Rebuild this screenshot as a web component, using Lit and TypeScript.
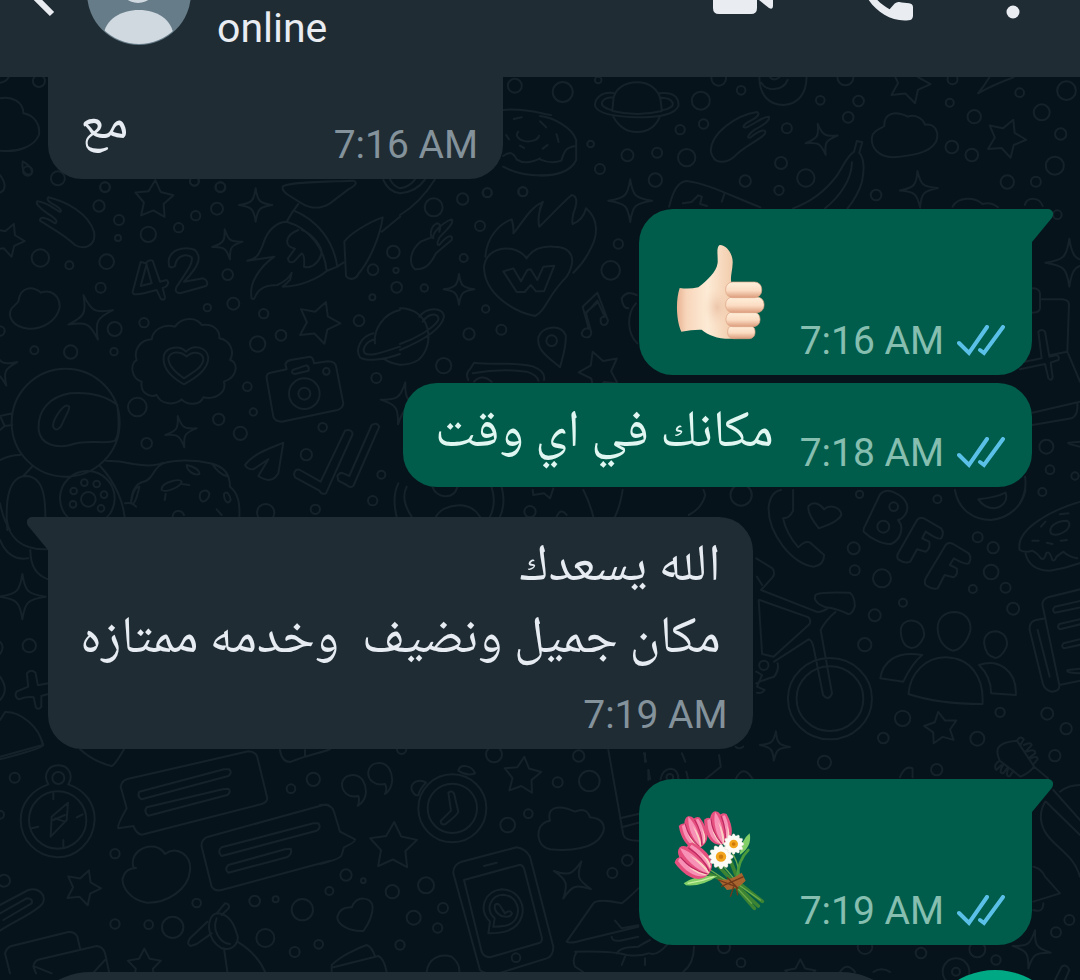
import { LitElement, html, svg, css, nothing } from "lit";
import { customElement, property } from "lit/decorators.js";

type Dot = [number, number, number];

/* Each region of the wallpaper is drawn on its own enlarged grid. */
interface Region {
  x: number;
  y: number;
  sx: number;
  dots: Dot[];
  stars?: [number, number, number, number][];
  sparks?: [number, number, number, number][];
  paths: string[];
}

const ring = (n: number, fn: (i: number) => [number, number]) =>
  Array.from({ length: n }, (_, i) => fn(i).map((v) => v.toFixed(1)).join(" ")).join("L");

const starPath = (x: number, y: number, r: number, rot: number) =>
  "M" + ring(10, (i) => {
    const a = ((rot - 90 + i * 36) * Math.PI) / 180;
    const q = i % 2 ? r * 0.52 : r;
    return [x + q * Math.cos(a), y + q * Math.sin(a)];
  }) + "Z";

const sparkPath = (x: number, y: number, r: number, rot: number) => {
  const p = (a: number, q: number) => {
    const t = ((rot - 90 + a) * Math.PI) / 180;
    return `${(x + q * Math.cos(t)).toFixed(1)} ${(y + q * Math.sin(t)).toFixed(1)}`;
  };
  let d = `M${p(0, r)}`;
  for (let i = 0; i < 4; i++) d += `Q${p(i * 90 + 12, r * 0.42)} ${p(i * 90 + 45, r * 0.36)}Q${p(i * 90 + 78, r * 0.42)} ${p(i * 90 + 90, r)}`;
  return d + "Z";
};

const circle = (x: number, y: number, r: number) =>
  `M${x - r} ${y}a${r} ${r} 0 1 0 ${2 * r} 0a${r} ${r} 0 1 0 ${-2 * r} 0Z`;

const REGIONS: Region[] = [
  {
    x: 0, y: 0, sx: 2.904,
    dots: [[113, 243, 18], [1495, 257, 21], [168, 535, 21], [305, 562, 15], [565, 543, 14], [640, 562, 15], [1415, 578, 14], [1518, 575, 14]],
    paths: [
      "M0 248Q18 246 25 232",
      "M0 295C35 288 68 305 68 340C100 345 118 375 113 405C100 440 50 458 0 452",
      "M66 484C90 498 98 515 88 523C72 528 62 510 66 484Z",
      "M0 525C18 550 18 570 0 578",
      "M1461 330C1520 322 1568 340 1600 345M1461 500C1500 522 1540 530 1600 525M1461 468C1480 455 1490 455 1500 478C1520 492 1540 490 1568 475",
      "M1505 395a32 20 0 1 0 60 12M1492 357L1515 352M1470 405L1478 418M1510 437L1522 444",
    ],
  },
  {
    x: 540, y: 0, sx: 2.904,
    dots: [[66, 276, 30], [169, 240, 10], [467, 302, 27], [519, 235, 22], [584, 271, 13], [475, 372, 14], [407, 389, 14], [717, 385, 15], [814, 301, 13], [925, 303, 16], [895, 352, 16], [887, 232, 24], [1198, 238, 15], [1190, 308, 12], [1261, 350, 20], [1457, 337, 24], [1529, 272, 28], [1393, 278, 13], [1512, 402, 17], [1495, 497, 27], [1440, 545, 15], [1357, 546, 20], [1254, 465, 19], [1196, 441, 19], [976, 585, 16], [772, 534, 26], [700, 489, 18], [694, 571, 14], [596, 543, 17], [426, 473, 26], [340, 458, 15], [254, 466, 18], [147, 432, 10], [174, 507, 15], [335, 540, 20]],
    stars: [[1072, 250, 62, 20], [1352, 415, 60, 22]],
    sparks: [[818, 418, 48, -14], [262, 602, 64, 0], [1100, 568, 55, -4]],
    paths: [
      "M213 300C215 268 245 247 282 247C320 247 345 270 350 300L354 333C310 344 255 344 210 333Z",
      "M213 279C175 275 158 298 160 318C168 342 220 350 280 352C345 352 392 345 402 318C404 290 385 275 346 280M213 292C185 292 175 306 182 317C190 325 200 328 210 331M348 293C378 292 390 306 384 318C376 326 366 329 354 331",
      "M213 350C230 382 255 396 282 396C312 396 336 380 348 350",
      "M0 348C40 352 95 385 105 420L105 480C90 515 45 528 0 526M105 438C75 440 70 455 62 482C40 490 15 485 0 478M0 364L18 382M48 403L54 426M8 446L22 435",
      "M630 336C570 345 495 400 496 455C505 495 540 490 562 472C590 440 630 425 652 403C662 385 640 388 612 412C598 418 604 402 625 388C650 375 668 362 665 350C650 348 625 370 600 382C585 385 588 375 612 362C632 352 640 340 630 336Z",
      "M637 232C637 285 665 315 707 315C750 312 774 280 774 232M643 248C655 275 705 275 719 240M668 232Q680 245 695 232",
      "M1000 378C998 340 1030 330 1068 350C1090 342 1112 355 1118 374C1150 370 1160 400 1150 425C1130 462 1070 468 1025 472C985 470 960 445 964 412C968 392 985 388 1000 378Z",
      "M920 423L936 427L927 458C945 480 940 520 935 545C925 580 905 610 893 625M920 423L912 455C890 470 880 500 860 530C830 570 790 605 735 625M906 487C905 540 870 590 828 625",
      "M375 620C385 580 398 545 425 543C480 548 560 590 640 622M535 583L528 605M415 610L440 606L460 586L470 590L465 612L485 618",
      "M1305 232Q1290 258 1272 280Q1315 255 1375 232M1198 620C1215 590 1260 590 1285 612Q1310 605 1330 622M1408 615C1415 590 1450 590 1460 618",
      "M0 625L8 605",
    ],
  },
  {
    x: 0, y: 170, sx: 3,
    dots: [[83, 3, 14], [315, 51, 14], [297, 108, 17], [357, 150, 15], [354, 204, 9], [583, 34, 13], [661, 51, 14], [651, 116, 18], [587, 137, 14], [536, 173, 14], [445, 193, 23], [121, 264, 26], [208, 286, 12], [320, 275, 22], [302, 353, 15], [344, 477, 21], [432, 458, 14], [342, 545, 11], [212, 546, 20], [103, 541, 12], [0, 483, 14], [683, 314, 16], [700, 401, 18], [622, 413, 11], [791, 431, 14], [843, 496, 16], [773, 522, 23], [1077, 452, 16], [1117, 382, 9], [1119, 299, 16], [1180, 246, 19], [1188, 301, 8], [1190, 352, 16], [1129, 624, 15], [412, 711, 28], [742, 650, 13], [760, 726, 11], [656, 748, 17], [721, 790, 20], [440, 820, 16], [968, 772, 13], [919, 854, 17], [1144, 914, 12], [1118, 992, 14], [946, 1018, 14], [797, 1028, 26], [253, 938, 10], [290, 942, 10], [221, 963, 10], [312, 974, 10], [219, 1003, 10], [303, 1015, 10], [979, 604, 10]],
    stars: [[462, 90, 60, 4], [22, 210, 52, 22], [955, 458, 66, 20]],
    sparks: [[767, 105, 50, 0], [682, 223, 46, -10], [272, 442, 70, -18], [543, 785, 48, -12], [0, 595, 55, -20], [1205, 700, 64, 10]],
    paths: [
      "M145 82C200 95 265 130 282 185C290 230 250 240 225 225C195 195 155 175 120 152C118 138 140 142 165 160C178 155 160 140 142 130C120 115 105 100 112 94C140 96 160 115 180 126C190 120 170 108 155 100Q138 90 145 82Z",
      "M55 395C60 352 95 345 123 368C155 355 180 380 179 412C170 455 125 478 85 476C40 472 20 440 35 415Z",
      "M438 280L422 276L398 365C398 375 405 378 470 360L482 386C490 392 495 388 495 382L488 354C505 350 508 335 500 330L480 335L458 272Q448 268 438 278L455 340L422 348L440 282",
      "M508 290C495 240 555 225 585 240C605 260 600 285 552 335L610 325C622 330 625 342 618 348L540 370C525 368 525 360 530 350C560 305 580 280 575 262C560 250 530 255 525 288Q515 295 508 290Z",
      "M848 50C860 35 1000 35 1060 32C1075 38 1065 48 1045 58L990 100C960 118 935 118 905 100L865 75Q845 62 848 50ZM895 102C880 120 868 140 860 155C825 155 800 190 792 215C780 250 770 268 742 272L823 260C780 290 745 340 755 385Q762 392 768 375C780 350 805 345 832 345Q865 330 875 308L870 330L848 350C900 350 955 325 980 303",
      "M882 122C950 150 1000 210 1012 290L980 303C975 240 930 175 860 155M895 180C855 195 850 230 885 236L864 265Q865 282 882 275L905 250Q915 255 912 290C940 298 962 270 965 245C958 215 925 185 905 180M1012 290L1030 278",
      "M1148 142C1110 155 1050 190 1033 215L1038 318C1048 332 1068 328 1075 312C1110 270 1140 200 1148 142ZM1145 185L1200 140M1150 30Q1165 65 1200 70M1170 28Q1180 48 1200 55",
      "M455 508C458 480 490 460 525 470C545 440 590 440 605 465C640 460 660 480 658 505C690 510 705 545 690 570C715 575 715 620 672 635C680 665 650 690 610 682C600 708 560 705 545 688C520 710 480 700 470 675C445 685 420 665 425 635C392 625 390 580 410 570C400 540 420 510 455 508Z",
      "M552 643C510 620 485 590 492 555C500 530 540 525 558 545C580 522 620 530 625 562C625 600 585 625 552 643ZM552 625C530 610 505 590 505 565C512 540 545 545 560 560C580 540 610 548 610 570C605 595 575 610 552 625Z",
      circle(197, 758, 162),
      "M352 705C320 680 270 665 210 670C150 680 112 720 116 780C122 825 170 835 210 825C260 805 320 825 345 812Q362 790 352 705ZM195 708C180 718 155 755 160 772C168 785 180 775 185 765C195 740 215 710 205 708Q200 705 195 708Z",
      "M37 730L0 738L14 768L37 765M14 768L0 780M0 870Q30 855 60 855M70 918L98 888M300 888C340 930 380 1000 375 1080M318 872Q360 872 400 882Q460 892 490 878M22 1080C15 990 25 920 78 918C130 920 140 980 135 1080M0 1000Q10 1050 30 1080",
      circle(262, 985, 82), circle(265, 988, 22),
      "M375 1000Q395 995 408 1010M393 1000C395 960 410 940 430 935C460 930 460 890 490 880C530 868 590 870 630 880C680 890 690 920 690 950C715 970 720 1000 718 1040M560 885C580 890 600 900 598 912C580 918 560 900 560 885ZM635 880C660 890 685 905 680 918Q660 915 635 880ZM485 955C490 935 540 925 545 935C542 950 500 970 485 960ZM545 942L568 945M497 972L494 990M600 985C595 960 620 955 628 970C628 990 605 1005 600 985ZM672 972C680 960 690 975 692 990C685 1005 672 995 672 972ZM518 1040C520 1018 545 1018 552 1035M650 1018L665 1035M393 1000Q405 1010 418 950Q400 950 393 1000",
      "M800 625Q798 610 812 608L860 598L856 582Q860 572 872 570L930 560Q940 562 942 580L985 574Q1005 575 1008 588L1030 700Q1028 715 1012 720L845 755Q825 755 820 740ZM878 600L918 586Q928 588 926 602L884 612Q872 610 878 600Z",
      circle(913, 671, 46), circle(913, 671, 18),
      "M735 885C760 850 810 835 850 818L835 910Q815 945 775 918L805 868L760 898Q740 898 735 885ZM882 912Q885 895 900 900L962 935L1035 782Q1055 775 1058 792L978 970Q965 975 958 962L885 922ZM1012 918Q1020 905 1030 910L1048 918L1115 765Q1130 755 1138 770L1060 948Q1050 955 1040 945L1015 932Z",
      "M1125 520C1120 480 1150 430 1200 420M1120 490C1080 500 1065 540 1080 562C1100 575 1150 570 1200 552M1125 508C1095 515 1085 540 1095 550C1110 560 1135 550 1200 530M1150 565Q1170 580 1200 584M1195 940Q1175 980 1190 1040",
    ],
  },
  {
    x: 400, y: 170, sx: 3,
    dots: [[101, 112, 27], [188, 87, 17], [262, 68, 13], [369, 65, 13], [240, 168, 15], [191, 264, 12], [73, 354, 11], [655, 222, 14], [632, 301, 28], [257, 417, 11], [207, 492, 17], [304, 479, 15], [131, 587, 23], [455, 512, 16], [390, 1025, 17]],
    sparks: [[177, 358, 46, 0]],
    stars: [[600, 605, 64, -20]],
    paths: [
      "M0 70Q50 65 75 28M0 55Q30 50 45 28M0 135Q60 100 105 28",
      "M155 148C125 158 98 190 100 200L62 215C30 240 25 280 45 298C80 300 95 275 108 250L155 210C160 195 145 190 118 225C108 228 112 205 130 190C150 170 162 155 155 148ZM100 205C88 200 90 170 110 160Q125 160 118 185",
      "M380 265C350 220 260 225 252 290C252 370 340 425 405 438C440 420 440 380 500 320C530 270 520 230 460 230C420 228 395 240 380 265ZM256 260C260 200 300 160 335 148Q342 170 340 190C360 170 390 110 428 97Q410 140 418 170C440 150 480 105 515 75Q540 80 520 130Q515 155 518 162Q550 150 558 115C600 150 590 200 575 230Q555 275 520 308",
      "M310 304L340 295L363 334L382 300L392 298L412 330L430 290L463 287L432 364H408L392 345L374 366H350Z",
      "M548 410L592 368L624 452C620 470 602 468 602 452Q600 440 614 440L592 392L558 430L574 488C572 508 548 505 545 490Q550 472 566 476ZM555 430L590 400M480 592C450 565 410 545 415 502C425 470 480 460 497 495C500 530 488 560 480 592Z",
      "M710 375Q680 360 665 385Q668 415 685 415M708 400C680 430 680 490 712 520",
      "M0 415C90 415 110 520 55 570Q30 585 0 584M58 440C80 410 130 410 132 440C125 480 60 515 0 540M68 455C90 425 118 430 115 450C100 475 50 505 0 522",
      "M205 630Q195 610 210 598L222 578C280 585 350 575 400 590Q438 605 432 630M218 610Q300 595 380 605Q412 615 415 632M222 635Q245 610 275 635",
      "M20 950C5 980 15 1010 35 1040M98 952C110 985 160 990 172 952M275 952Q290 1000 270 1040M305 952Q318 1000 300 1040M108 1040C130 1000 210 990 240 1040M398 960L400 975L432 970L450 985L460 955M550 960Q570 1000 580 1040M668 960Q660 1010 645 1040M470 1040Q482 1012 500 1035",
    ],
  },
  {
    x: 0, y: 500, sx: 2.904,
    dots: [[85, 437, 20]],
    sparks: [[65, 290, 68, 0]],
    paths: [
      "M0 120C20 170 50 180 82 175M20 60C25 110 60 150 138 148M88 150Q88 220 140 238M0 425Q15 440 0 462M48 575Q40 590 55 598Q80 588 98 592L104 622Q112 632 120 620V588L140 582M48 575L82 560L78 520Q90 505 103 518L110 556L140 550",
      "M0 530Q28 570 0 600M15 636C60 635 115 680 124 735L0 770M15 636L0 660",
    ],
  },
  {
    x: 540, y: 490, sx: 2.904,
    dots: [[584, 15, 32], [928, 13, 11], [1154, 28, 12], [911, 175, 18], [914, 241, 15], [993, 265, 27], [1054, 338, 12], [972, 376, 18], [943, 464, 20], [1271, 142, 15], [1316, 173, 17], [1310, 246, 22], [1257, 297, 12], [1352, 293, 15], [1374, 356, 18], [1053, 685, 23], [997, 744, 16], [826, 817, 20], [1270, 746, 21], [1336, 667, 14], [1473, 671, 18], [1528, 716, 17], [1495, 797, 17], [1152, 839, 17], [1027, 50, 13], [997, 110, 18], [650, 526, 14]],
    stars: [[1165, 715, 50, -10]],
    sparks: [[682, 768, 44, 4]],
    paths: [
      "M735 0V62Q725 85 706 85Q715 130 750 172Q770 150 785 158L825 195Q825 225 795 230C735 225 660 130 664 50Q670 5 700 0M810 115C790 90 775 65 780 48C795 32 815 42 825 58C845 40 875 55 875 75C865 95 835 105 810 115Z",
      "M988 12C1000 0 1015 0 1030 8C1065 25 1075 50 1060 75Q1050 88 1040 90C1060 115 1045 150 1020 162C995 165 960 145 940 125Q938 115 945 105ZM1095 90Q1102 80 1115 85L1165 115Q1175 130 1165 145Q1155 150 1120 125L1110 145L1130 155Q1135 175 1120 185L1095 178L1075 215Q1060 222 1040 208Q1035 200 1040 190ZM1178 165Q1185 155 1200 162L1245 190Q1255 205 1245 220Q1235 225 1202 205L1190 225L1210 235Q1215 255 1200 262L1175 255L1155 295Q1140 300 1120 285Q1115 275 1120 265Z",
      "M1205 0C1215 60 1260 90 1310 90C1360 85 1400 50 1410 0M1273 28C1300 25 1330 20 1352 8C1360 30 1345 50 1320 55Q1290 55 1273 28Z",
      "M1580 32C1480 60 1380 120 1393 180Q1410 190 1430 182Q1445 190 1455 205Q1465 212 1470 190Q1480 180 1488 210Q1495 215 1500 200L1520 185Q1535 200 1560 205M1410 190Q1420 240 1480 242Q1530 235 1580 215M1484 130C1475 110 1500 92 1530 92Q1545 100 1530 120Q1500 142 1484 130ZM1455 110L1468 95M1510 73L1535 70M1430 152L1448 152M1472 158L1488 162M1512 152L1530 150",
      "M628 205L675 235Q685 250 675 262L642 300L795 362Q810 372 835 355M630 260L645 285M638 330L780 382Q790 395 780 405L678 500L645 492L635 330M680 515L780 448Q790 450 795 475L822 615Q838 635 848 610L815 420Q830 390 858 366M800 315Q810 305 900 308Q915 320 914 350Q905 375 895 372Q860 355 830 352Q800 340 798 325ZM628 580Q660 565 680 560Q695 540 690 520M628 545L645 555L630 590L652 600Q645 612 630 608",
      circle(842, 626, 122), circle(842, 626, 97),
      "M1048 428C1045 400 1065 390 1083 392C1105 395 1118 415 1115 440C1105 465 1090 474 1080 474C1062 472 1050 455 1048 428ZM1155 420C1152 385 1175 366 1205 366C1235 368 1252 390 1250 420C1242 455 1220 480 1200 482C1178 478 1158 455 1155 420ZM1290 460C1288 435 1305 424 1325 424C1348 428 1360 445 1355 470C1345 495 1330 504 1322 504C1305 500 1292 485 1290 460Z",
      "M988 565C995 520 1030 480 1110 495Q1080 520 1055 575ZM1070 612C1075 550 1120 500 1180 502C1250 505 1290 560 1285 642C1230 642 1150 640 1070 612ZM1275 525C1330 505 1385 540 1382 615L1310 610Q1310 560 1275 525Z",
      "M1580 295L1475 322Q1455 330 1460 350L1508 585Q1510 605 1485 605Q1465 600 1460 580L1422 420Q1420 395 1440 390L1468 385M1445 420L1480 560M1580 330L1495 350Q1485 360 1495 368L1580 350M1580 385L1508 402Q1500 412 1510 418L1580 400M1580 445L1520 460Q1512 470 1522 475L1580 462M1580 535L1532 540Q1525 550 1580 550M1508 585L1580 570",
      "M432 75Q470 55 480 15L475 0M302 790L308 815M412 790L422 815M520 795L525 830L480 868M350 868Q355 838 380 836Q402 838 402 868M568 868Q590 820 618 868M315 840L320 868M425 845L430 868M568 770Q578 780 590 770",
      circle(377, 862, 10),
      "M1330 775Q1340 755 1385 752L1435 830Q1420 850 1395 860L1335 812Q1325 790 1330 775ZM1385 752Q1395 735 1405 748L1395 765M1405 765Q1425 755 1428 765L1410 785M1415 785Q1440 775 1438 790L1422 802M1425 805Q1445 795 1445 808L1435 820M1335 812Q1315 825 1325 840L1340 825M1345 825Q1330 850 1345 850L1358 832M1360 835Q1350 862 1365 858L1375 842M1435 830L1475 865M1045 862Q1060 825 1082 835V862",
    ],
  },
  {
    x: 0, y: 740, sx: 3,
    dots: [[44, 113, 15], [0, 224, 12], [12, 422, 18], [873, 146, 13], [940, 118, 20], [345, 341, 14], [345, 552, 14], [446, 554, 13], [518, 562, 32], [590, 489, 13], [764, 483, 16], [827, 478, 9], [907, 509, 32], [796, 594, 27], [884, 636, 15], [956, 613, 13]],
    stars: [[248, 443, 55, 20], [433, 678, 52, 0]],
    paths: [
      circle(175, 114, 18), circle(173, 240, 86),
      "M145 133C130 110 140 76 175 76C210 76 220 110 205 133C255 150 285 190 284 240C280 310 225 352 172 352C110 350 62 300 62 240C62 190 95 150 145 133ZM160 160V178M248 223L230 232M190 320V300M95 265L115 260M204 188L155 230L152 290L200 240ZM160 240L195 225M165 235L195 245",
      "M130 15Q128 25 0 58M125 0L130 15M240 28Q280 65 335 78Q345 75 372 28",
      "M382 117L745 34Q768 35 772 52L802 175Q800 188 785 192L425 284Q410 282 400 258L355 265Q350 258 380 205L362 140Q365 122 382 117ZM418 155Q410 168 425 178L685 108Q698 98 688 88L672 88ZM440 202Q430 215 445 227L682 165Q695 155 685 146L668 148Z",
      "M400 382C390 340 430 315 465 320Q485 325 495 342C530 315 575 345 570 392C565 450 500 490 440 488C390 480 365 440 368 415Q375 385 408 384Z",
      "M625 290L970 195Q985 190 990 200M605 320Q602 298 625 290M605 320L635 440Q645 455 665 450L990 362M665 322Q650 335 665 348L950 272Q965 262 955 250L940 250ZM685 375Q672 388 685 398L860 352Q878 342 872 326L855 328Z",
      "M0 495L85 450C115 440 140 465 128 490C110 515 50 540 0 572M0 520L80 475Q100 475 95 490L10 540M15 640Q20 622 35 618L205 576Q225 575 232 590L240 625M15 640L30 700M100 680Q102 662 120 658L290 618Q310 620 315 640L328 700M100 680L108 700M105 680L155 700M315 660L278 700",
      "M650 520L675 490Q690 490 686 505L665 525M622 545L570 595Q558 612 572 618L590 612L635 580M650 520C615 530 620 600 665 625C705 635 720 600 710 580C700 545 680 520 650 520ZM650 535C635 570 660 610 690 612M672 625L682 695M712 605Q770 640 795 695",
      "M840 30Q845 65 870 66L915 50V30M915 50L985 30",
    ],
  },
  {
    x: 320, y: 740, sx: 3,
    dots: [[522, 43, 24], [776, 48, 17], [713, 127, 15], [808, 123, 31], [563, 255, 22], [625, 221, 13], [922, 361, 16], [877, 399, 15], [78, 405, 17], [130, 422, 7], [28, 453, 12], [217, 455, 20], [318, 436, 24], [281, 533, 21], [369, 504, 15], [353, 564, 14], [240, 615, 14], [588, 653, 13], [245, 28, 14]],
    stars: [[607, 108, 58, 6], [220, 320, 74, 2]],
    sparks: [[757, 420, 62, 26]],
    paths: [
      "M113 198Q120 180 115 168C85 175 65 155 66 130C72 100 110 98 128 120C145 150 140 180 113 198ZM195 162Q203 145 195 132C165 138 142 120 145 95C150 65 190 60 207 85C225 115 215 150 195 162Z",
      circle(397, 205, 102), circle(397, 205, 74),
      "M385 158Q395 150 402 160L415 215Q412 225 375 253Q362 255 362 243L393 212ZM415 92C420 70 455 75 465 100Q440 110 415 92ZM318 128C300 115 270 125 275 150Q285 170 295 165Q300 145 318 128Z",
      "M0 195Q35 190 42 215L60 275L105 298Q108 305 72 322L65 345Q60 358 0 372M0 38L30 28",
      "M690 242C680 205 710 190 765 215Q800 200 810 232C850 235 860 260 845 285C825 325 750 335 690 328C655 320 650 285 660 262Q670 245 690 242Z",
      "M130 573C90 575 50 555 52 530Q60 500 95 502C110 465 155 470 158 500Q158 535 130 573Z",
      "M400 400Q398 375 425 365L590 322Q615 325 630 350L700 620Q700 648 680 655L535 700Q495 705 480 690ZM432 420L600 374Q608 375 612 385L665 590Q668 605 660 608L510 652Q490 650 485 635ZM492 378L530 368",
      "M505 580L510 545C475 510 490 455 545 448C600 450 615 500 605 530C590 575 545 580 505 580ZM520 560L524 535C495 510 510 465 550 464C590 468 605 510 585 540C570 560 545 560 520 560ZM525 495Q535 485 545 505L555 520Q570 508 576 520Q570 535 545 528Q520 515 525 495Z",
      "M35 675C60 650 110 625 140 615Q155 620 165 648M40 682L175 648Q192 655 200 696M35 675V696M320 696C325 655 360 640 395 650Q420 670 418 696",
      "M865 30L910 285Q915 302 955 302M900 235L955 222M905 262L955 248M975 40V65M985 90V120",
      "M740 605L820 490Q835 475 905 490Q925 475 955 445M740 605Q750 612 790 600L955 560M885 542L905 565L955 556M875 590Q875 605 900 602L955 590M890 640Q900 620 955 620Q970 610 990 600M770 635Q755 660 765 680L790 696M765 635Q880 632 920 645Q960 650 985 640M915 650L905 675M975 655V675",
    ],
  },
  {
    x: 620, y: 740, sx: 3,
    dots: [[1348, 540, 15], [1308, 577, 15], [1128, 660, 14], [903, 639, 16], [363, 668, 13], [312, 622, 18], [1072, 628, 24], [735, 620, 22], [1008, 695, 12], [1008, 695, 40]],
    stars: [[541, 706, 48, 0]],
    sparks: [[1235, 628, 58, 10]],
    paths: [
      "M1300 150L1380 240M1278 185L1380 285M1320 155Q1345 135 1380 135M1275 185Q1250 230 1275 275C1300 320 1360 340 1380 410M1240 380Q1265 385 1275 410L1320 460L1240 485M1240 510Q1270 520 1270 490",
      "M90 640Q110 650 145 610M222 620Q222 670 190 695M660 696Q680 665 705 696M760 696Q785 680 810 696M1305 720L1325 680Q1340 670 1348 690L1335 720",
    ],
  },
  {
    x: 1020, y: 200, sx: 3,
    dots: [[112, 44, 13], [79, 740, 21], [90, 809, 13], [67, 876, 12], [165, 828, 11]],
    sparks: [[148, 188, 72, 0]],
    paths: [
      "M37 265Q58 265 60 280V325Q58 338 37 338M60 298H128Q145 300 147 312L142 455L180 545M0 508L75 492L85 535Q95 545 98 532L92 488L115 480Q120 470 110 465L88 470L75 395Q65 385 55 395L65 475L0 488M88 466L142 455",
      "M37 638L180 605M37 675L155 655Q175 645 172 612M180 725L145 728Q142 732 180 740M15 830Q22 870 0 910",
    ],
  },
];

const WALLPAPER = REGIONS.map((g) => {
  const k = 1 / g.sx;
  const d = [
    ...(g.stars ?? []).map((s) => starPath(...s)),
    ...(g.sparks ?? []).map((s) => sparkPath(...s)),
    ...g.paths,
  ].join("");
  return svg`
    <path d=${d} transform="translate(${g.x} ${g.y}) scale(${k} ${1 / 3})" vector-effect="non-scaling-stroke"></path>
    ${g.dots.map(([x, y, r]) => svg`<circle cx=${g.x + x * k} cy=${g.y + y / 3} r=${r / 3}></circle>`)}`;
});

const thumb = svg`
  <defs>
    <linearGradient id="skin" x1="0" x2="1" y1="0" y2="0">
      <stop offset="0" stop-color="#e9b493"></stop><stop offset=".16" stop-color="#f8d6bb"></stop>
      <stop offset=".5" stop-color="#fdebd6"></stop><stop offset="1" stop-color="#f0c5a3"></stop>
    </linearGradient>
    <linearGradient id="finger" x1="0" x2="0" y1="0" y2="1">
      <stop offset="0" stop-color="#fff0dc"></stop><stop offset=".55" stop-color="#fbdcc2"></stop>
      <stop offset="1" stop-color="#dc9c7c"></stop>
    </linearGradient>
    <radialGradient id="palm"><stop offset="0" stop-color="#e0ad90" stop-opacity=".5"></stop><stop offset="1" stop-color="#f6d3b8" stop-opacity="0"></stop></radialGradient>
  </defs>
  <path d="M176 264Q205 268 232 262C258 240 286 218 290 188C291 165 285 142 296 135C318 134 337 165 335 190C334 215 326 235 332 250L350 415C300 421 265 408 242 389Q215 388 181 395C165 360 164 300 176 264Z" fill="url(#skin)"></path>
  <ellipse cx="288" cy="322" rx="44" ry="60" fill="url(#palm)"></ellipse>
  <g fill="url(#finger)" stroke="#dda384" stroke-width="2">
    <rect x="320" y="376" width="82" height="40" rx="17"></rect>
    <rect x="315" y="336" width="102" height="44" rx="20"></rect>
    <rect x="314" y="291" width="115" height="47" rx="21"></rect>
    <rect x="314" y="246" width="108" height="47" rx="21"></rect>
  </g>`;

const tulip = (x: number, y: number, rot: number, k: number) => svg`
  <g transform="translate(${x} ${y}) rotate(${rot}) scale(${k})">
    <path d="M0 52C-38 50-46 8-35-36Q-24-42-16-36Q-8-52 4-52Q14-50 18-38Q28-42 36-34C46 10 38 50 0 52Z" fill="#e5507f"></path>
    <path d="M-26-32C-36 6-28 38-8 48C-18 20-20-8-14-34ZM4-50C-12-20-12 20 0 50C14 20 16-20 4-50ZM30-32C36 0 28 34 12 46C20 20 22-8 22-32Z" fill="#f792b6"></path>
    <path d="M-8 48C-18 30-20 14-20 0Q-10 24-3 51ZM0 50Q6 20 5-18Q16 24 4 51ZM12 46C24 28 28 10 27-4Q34 26 18 44Z" fill="#fbd3c4"></path>
    <path d="M-14-34C-20 0-12 30-3 48M18-34C22 0 16 30 6 48" fill="none" stroke="#b92860" stroke-width="3"></path>
  </g>`;

const daisy = (x: number, y: number, r: number) => svg`
  <g transform="translate(${x} ${y})">
    ${[0, 30, 60, 90, 120, 150].map((a) => svg`<ellipse rx=${r} ry=${r * 0.3} transform="rotate(${a})" fill="#fdfbf6" stroke="#d5d2c2" stroke-width="1"></ellipse>`)}
    <circle r=${r * 0.8} fill="#fdfbf6"></circle>
    <circle r=${r * 0.42} fill="#f2a51c"></circle><circle r=${r * 0.18} fill="#cf780c"></circle>
  </g>`;

const bouquet = svg`
  <g fill="none" stroke-linecap="round">
    <path d="M250 395L340 435L400 505M285 370L350 440L412 498M320 340L355 430L424 484" stroke="#3c8332" stroke-width="11"></path>
    <path d="M268 390L345 440L392 490M300 370L358 438L418 480M335 340Q362 390 352 430" stroke="#6dab4c" stroke-width="4"></path>
    <path d="M382 330Q350 360 348 420" stroke="#4b9b3d" stroke-width="8"></path>
  </g>
  <path d="M188 430Q225 402 290 408Q245 440 195 436ZM356 345Q360 300 386 280Q394 320 356 345Z" fill="#82cf68"></path>
  <path d="M200 430Q240 425 280 410" fill="none" stroke="#c9f0a0" stroke-width="4"></path>
  ${tulip(218, 276, -24, 0.96)}${tulip(292, 264, -16, 0.98)}${tulip(218, 364, -50, 1.14)}
  ${daisy(300, 350, 37)}${daisy(338, 312, 31)}
  <path d="M290 418Q325 425 362 398L374 422Q350 448 318 450Z" fill="#a8642f"></path>
  <path d="M292 420L345 440M300 440L368 410M338 440L328 470M345 438L350 466M318 412L352 446" fill="none" stroke="#70391a" stroke-width="4"></path>`;

interface Message {
  out: boolean;
  time: string;
  lines?: string[];
  emoji?: "thumb" | "bouquet";
  kind: "cut" | "row" | "block";
  tail?: boolean;
}

const MESSAGES: Message[] = [
  { out: false, time: "7:16 AM", lines: ["مع"], kind: "cut" },
  { out: true, time: "7:16 AM", emoji: "thumb", kind: "row", tail: true },
  { out: true, time: "7:18 AM", lines: ["مكانك في اي وقت"], kind: "row" },
  { out: false, time: "7:19 AM", lines: ["الله يسعدك", "مكان جميل ونضيف  وخدمه ممتازه"], kind: "block", tail: true },
  { out: true, time: "7:19 AM", emoji: "bouquet", kind: "row", tail: true },
];

@customElement("chat-bubble")
class ChatBubble extends LitElement {
  @property({ attribute: false }) message!: Message;

  static styles = css`
    :host { display: flex; }
    .bubble {
      position: relative;
      display: flex;
      align-items: flex-end;
      gap: 0 26px;
      padding: 14px 25px 10px 32px;
      border-radius: 34px;
      background: #1f2c34;
      color: #e6ecf2;
    }
    .out { margin-left: auto; padding-right: 27px; background: #005d4b; color: #e0f6f1; }
    .cut { min-width: 398px; padding-top: 12px; border-radius: 0 0 34px 34px; justify-content: space-between; }
    .block { flex-direction: column; }
    .block .text { margin: 0 7px 16px 0; }
    .tail-in { border-top-left-radius: 0; }
    .tail-out { border-top-right-radius: 0; }
    .tail { position: absolute; top: 0; width: 22px; height: 33px; fill: #1f2c34; }
    .tail-in .tail { right: 100%; }
    .tail-out .tail { left: 100%; fill: #005d4b; }
    .text {
      margin: 0 0 8px;
      font-family: "Noto Naskh Arabic UI", "Noto Naskh Arabic", "Noto Sans Arabic", "DejaVu Sans", sans-serif;
      font-size: 52px;
      line-height: 72px;
      white-space: pre-wrap;
    }
    .emoji { width: 103px; height: 104px; margin: 17px 0 21px; }
    .meta {
      display: flex;
      align-items: center;
      gap: 13px;
      font-size: 39px;
      line-height: 48px;
      white-space: nowrap;
      color: #84929b;
    }
    .out .meta { color: #86beb0; }
    .ticks { width: 48px; height: 32px; fill: none; stroke: #5bc0e8; stroke-width: 4; stroke-linecap: round; stroke-linejoin: miter; }
  `;

  render() {
    const m = this.message;
    const tail = m.tail ? (m.out ? "tail-out" : "tail-in") : "";
    return html`
      <div class="bubble ${m.kind} ${m.out ? "out" : ""} ${tail}">
        ${m.tail
          ? html`<svg class="tail" viewBox="0 0 22 33" aria-hidden="true">
              <path d=${m.out ? "M0 0H15C21 0 23 5 19 10L0 33Z" : "M22 0H7C1 0-1 5 3 10L22 33Z"}></path>
            </svg>`
          : nothing}
        ${m.emoji
          ? html`<svg class="emoji" viewBox="150 ${m.emoji === "thumb" ? 120 : 210} 309 312" role="img"
              aria-label=${m.emoji === "thumb" ? "👍🏻" : "💐"}>${m.emoji === "thumb" ? thumb : bouquet}</svg>`
          : html`<p class="text" dir="rtl">${m.lines!.join("\n")}</p>`}
        <div class="meta">
          <time>${m.time}</time>
          ${m.out
            ? html`<svg class="ticks" viewBox="0 0 48 32" aria-hidden="true">
                <path d="M2 18L12 28L30 2M23 25L27 28L46 2"></path>
              </svg>`
            : nothing}
        </div>
      </div>`;
  }
}

@customElement("app-root")
class AppRoot extends LitElement {
  static styles = css`
    :host {
      display: flex;
      flex-direction: column;
      height: 100vh;
      overflow: hidden;
      background: #07131a;
      font-family: Roboto, sans-serif;
    }
    .header {
      flex: none;
      display: flex;
      align-items: flex-end;
      height: 77px;
      overflow: hidden;
      background: #1f2c34;
      color: #e9edf2;
    }
    .toolbar {
      flex: 1;
      display: flex;
      align-items: center;
      height: 168px;
      padding: 0 47px 0 24px;
    }
    .icon-button {
      flex: none;
      width: 72px;
      height: 72px;
      padding: 0;
      border: 0;
      background: none;
      color: inherit;
    }
    .narrow { width: 40px; }
    .icon-button svg { display: block; width: 100%; height: 100%; fill: currentColor; }
    .avatar { flex: none; width: 104px; height: 104px; margin: 0 26px 0 23px; }
    .status { flex: 1; margin: 0; padding-top: 70px; font-size: 41px; line-height: 48px; }
    .actions { display: flex; gap: 71px; }
    .chat { position: relative; flex: 1; min-height: 0; overflow: hidden; }
    .wallpaper {
      position: absolute;
      inset: 0;
      width: 100%;
      height: 100%;
      fill: none;
      stroke: #16222a;
      stroke-width: 2;
      stroke-linejoin: round;
      stroke-linecap: round;
    }
    .messages {
      position: relative;
      display: flex;
      flex-direction: column;
      gap: 8px;
      margin: 0;
      padding: 0 48px;
      list-style: none;
    }
    .lead { margin-top: 22px; }
    .composer {
      position: relative;
      display: flex;
      align-items: center;
      gap: 10px;
      padding: 25px 12px 12px 20px;
    }
    .entry {
      flex: 1;
      min-width: 0;
      box-sizing: border-box;
      height: 142px;
      padding: 0 130px;
      border: 0;
      border-radius: 71px;
      background: #1f2c34;
      color: #e9edf2;
      font: inherit;
      font-size: 46px;
    }
    .mic {
      flex: none;
      width: 146px;
      height: 146px;
      padding: 0;
      border: 0;
      border-radius: 50%;
      background: #00a884;
    }
  `;

  render() {
    return html`
      <header class="header">
        <div class="toolbar">
          <button class="icon-button narrow" aria-label="Back">
            <svg viewBox="0 0 40 72"><path d="M28 57L7 36L28 15" fill="none" stroke="currentColor" stroke-width="6"></path></svg>
          </button>
          <svg class="avatar" viewBox="0 0 104 104" role="img" aria-label="Contact photo">
            <defs><clipPath id="disc"><circle cx="52" cy="52" r="51"></circle></clipPath></defs>
            <circle cx="52" cy="52" r="52" fill="#667c88"></circle>
            <g fill="#d0d8e0" clip-path="url(#disc)">
              <circle cx="51" cy="43" r="19"></circle>
              <path d="M16 96C18 78 34 69 52 69S85 78 87 96V104H16Z"></path>
            </g>
          </svg>
          <p class="status">online</p>
          <div class="actions">
            <button class="icon-button" aria-label="Video call">
              <svg viewBox="0 0 72 72"><path d="M12 15H44Q50 15 50 21V51Q50 57 44 57H12Q6 57 6 51V21Q6 15 12 15ZM52 32L62 22Q66 19 66 23V49Q66 53 62 51L52 43Z"></path></svg>
            </button>
            <button class="icon-button" aria-label="Voice call">
              <svg viewBox="0 0 24 24"><path d="M6.6 10.8c1.4 2.8 3.8 5.1 6.6 6.6l1.7-1.9q.7-.6 1.5-.5c1.200.3 2.200.3 3.300.4q1.300.2 1.300 1.300v3q-.1 1.400-1.500 1.400C10.600 22 3 13.400 3 4q0-1 1-1h3.500q1 0 1 1c0 1.200.2 2.400.6 3.600q.1.6-.3 1z"></path></svg>
            </button>
            <button class="icon-button narrow" aria-label="More options">
              <svg viewBox="0 0 40 72"><circle cx="20" cy="17" r="6.500"></circle><circle cx="20" cy="36" r="6.500"></circle><circle cx="20" cy="55" r="6.500"></circle></svg>
            </button>
          </div>
        </div>
      </header>
      <main class="chat">
        <svg class="wallpaper" viewBox="0 77 1080 903" preserveAspectRatio="xMidYMin slice" aria-hidden="true">${WALLPAPER}</svg>
        <ul class="messages">
          ${MESSAGES.map((m) => html`<li class=${m.tail ? "lead" : "follow"}><chat-bubble .message=${m}></chat-bubble></li>`)}
        </ul>
        <form class="composer">
          <input class="entry" type="text" aria-label="Message" />
          <button class="mic" type="button" aria-label="Record voice message"></button>
        </form>
      </main>`;
  }
}
